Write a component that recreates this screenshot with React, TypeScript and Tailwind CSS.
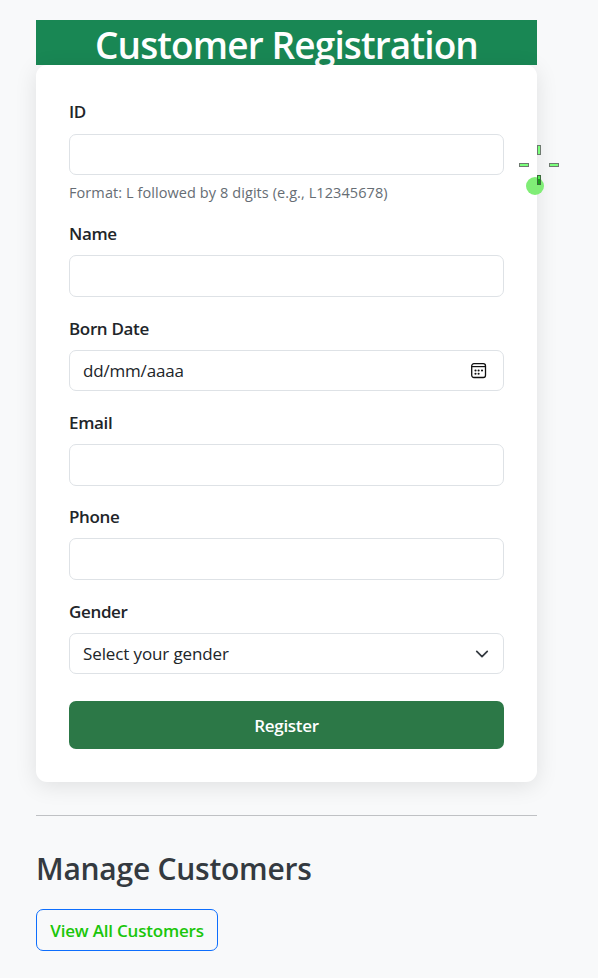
import type { ReactNode } from "react";

const inputBox =
  "flex w-full items-center justify-between rounded-[7px] border border-[#dee2e6] bg-white px-[13px] text-[17px] text-[#212529]";

function Field({
  label,
  className,
  labelLeading = "leading-[27px]",
  children,
}: {
  label: string;
  className: string;
  labelLeading?: string;
  children: ReactNode;
}) {
  return (
    <div className={className}>
      <div className={`mb-[9px] h-[26px] text-[17px] font-semibold tracking-[-0.35px] text-[#212529] ${labelLeading}`}>
        <span>{label}</span>
      </div>
      {children}
    </div>
  );
}

function CalendarIcon() {
  return (
    <svg className="mr-[3px] h-4 w-4" viewBox="0 0 16 16" fill="none">
      <rect x="0.7" y="0.7" width="13.8" height="13.8" rx="2.2" stroke="#111" strokeWidth="1.3" />
      <path d="M0.8 3.6h13.8" stroke="#111" strokeWidth="1.2" />
      <g fill="#111">
        <circle cx="4.5" cy="7.5" r="1.05" />
        <circle cx="7.6" cy="7.5" r="1.05" />
        <circle cx="11" cy="7.5" r="1.05" />
        <circle cx="4.5" cy="10.7" r="1.05" />
        <circle cx="7.6" cy="10.7" r="1.05" />
      </g>
    </svg>
  );
}

function Crosshair() {
  return (
    <svg className="pointer-events-none absolute top-[140px] left-[514px] z-20" width="50" height="60" viewBox="514 140 50 60">
      <circle cx="535" cy="186" r="9" fill="#80ed76" />
      <g fill="#7bff7b" stroke="#6e7a70" strokeWidth="1">
        <rect x="537.5" y="145.5" width="3" height="9" />
        <rect x="519.5" y="163.5" width="9" height="3" />
        <rect x="549.5" y="163.5" width="9" height="3" />
      </g>
      <rect x="537.5" y="175.5" width="3" height="9" fill="#52e852" stroke="#3b6b3b" />
      <rect x="538" y="179" width="2" height="5" fill="#18a018" />
    </svg>
  );
}

export default function App() {
  return (
    <div className="relative h-[978px] w-[598px] overflow-hidden bg-[#f8f9fa] pt-5 pl-9 font-['Open_Sans','Noto_Sans',sans-serif]">
      <div className="w-[501px]">
        <h1 className="h-[45px] bg-[#198754] text-center text-[37px] leading-[49px] font-semibold tracking-[-0.87px] whitespace-nowrap text-white">
          Customer Registration
        </h1>
        <form className="relative h-[717px] rounded-[11px] bg-white px-[33px] pt-[34px] shadow-[0_4px_22px_rgba(0,0,0,0.1)]">
          <Field label="ID" className="h-[121px]" labelLeading="leading-[26px]">
            <div className={`${inputBox} h-[41px]`} />
            <p className="mt-[5px] text-[14.5px] leading-[26px] tracking-[0.08px] whitespace-nowrap text-[#666d74]">
              Format: L followed by 8 digits (e.g., L12345678)
            </p>
          </Field>
          <Field label="Name" className="h-[95px]">
            <div className={`${inputBox} h-[42px]`} />
          </Field>
          <Field label="Born Date" className="h-[94px]">
            <div className={`${inputBox} h-[41px]`}>
              <span className="tracking-[-0.18px]">dd/mm/aaaa</span>
              <CalendarIcon />
            </div>
          </Field>
          <Field label="Email" className="h-[94px]">
            <div className={`${inputBox} h-[42px]`} />
          </Field>
          <Field label="Phone" className="h-[95px]">
            <div className={`${inputBox} h-[42px]`} />
          </Field>
          <Field label="Gender" className="h-[103px]">
            <div className={`${inputBox} h-[41px]`}>
              <span className="tracking-[-0.12px]">Select your gender</span>
              <svg className="mr-px h-[14px] w-[14px]" viewBox="0 0 16 16" fill="none" stroke="#343a40" strokeWidth="2" strokeLinecap="round" strokeLinejoin="round">
                <path d="m2 5 6 6 6-6" />
              </svg>
            </div>
          </Field>
          <button type="button" className="h-12 w-full rounded-[7px] bg-[#2c7847] pt-0.5 text-[17px] font-semibold tracking-[-0.3px] text-white">
            Register
          </button>
        </form>
        <div className="mt-[33px] h-px bg-[#bfc1c4]" />
        <h2 className="mt-[34px] h-[37px] text-[30px] leading-[37px] font-semibold tracking-[-0.25px] whitespace-nowrap text-[#343a40]">
          <span>Manage Customers</span>
        </h2>
        <button type="button" className="mt-[22px] h-[42px] w-[182px] rounded-[7px] border border-[#0d6efd] pt-0.5 text-[17px] font-semibold tracking-[-0.2px] whitespace-nowrap text-[#1ac60a]">
          View All Customers
        </button>
      </div>
      <Crosshair />
    </div>
  );
}
